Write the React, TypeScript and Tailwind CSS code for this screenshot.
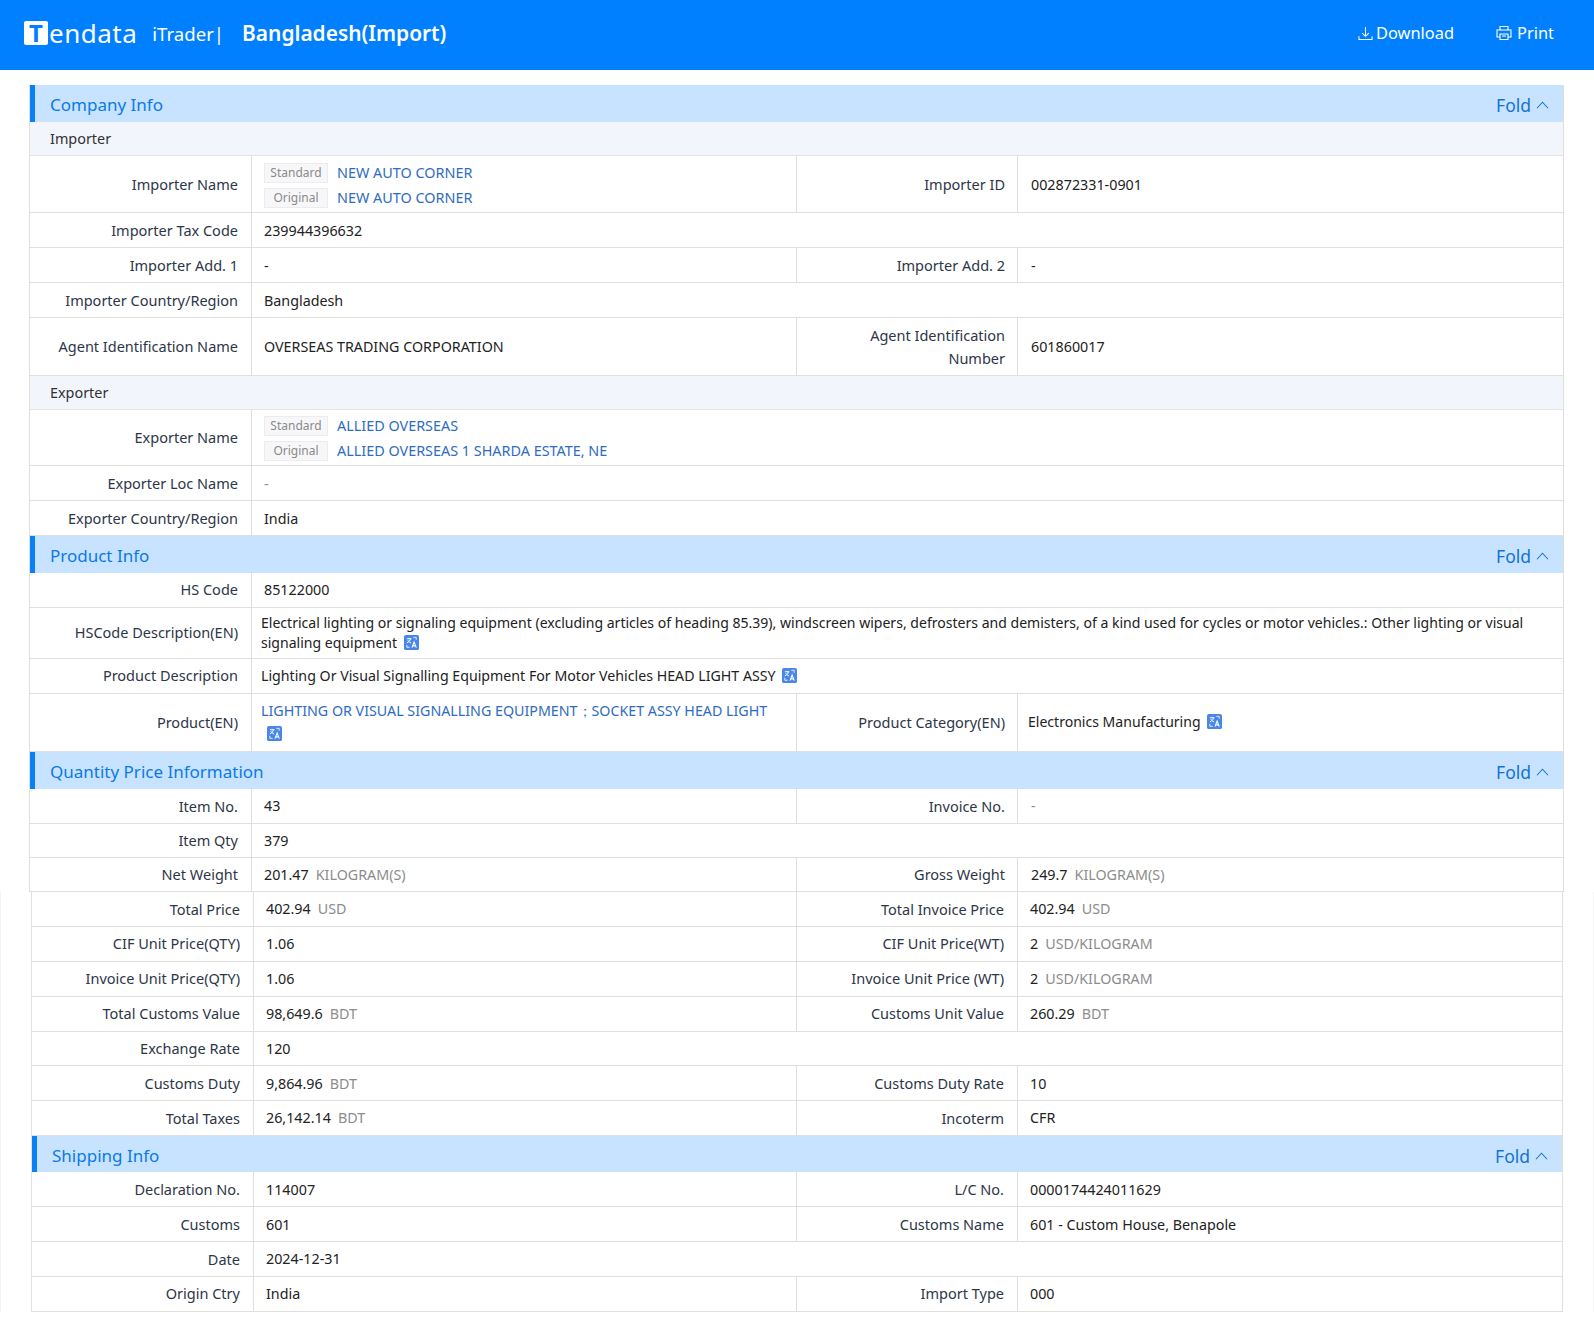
import React from "react";

const font = { fontFamily: '"Noto Sans", "Open Sans", sans-serif' };

function Translate({ far }: { far?: boolean }) {
  return (
    <svg viewBox="0 0 16 16" className={"inline-block w-[15px] h-[15px] align-[-2px] " + (far ? "ml-[6px]" : "ml-[3px]")}>
      <rect width="16" height="16" rx="2" fill="#4a86e8" />
      <path d="M3 4h5M5.5 3v1M7 4c-.4 2-2 3.5-4 4.4M4 5.5c.6 1.2 2 2.4 3.6 3" stroke="#fff" strokeWidth="1" fill="none" />
      <path d="M8.5 13.5l2.3-6 2.3 6M9.4 11.6h2.9" stroke="#fff" strokeWidth="1.1" fill="none" />
      <path d="M3 10.5v2.6h3M10 2.5h3v2.6" stroke="#fff" strokeWidth=".9" fill="none" />
    </svg>
  );
}

function Bar({ title, tall }: { title: string; tall?: boolean }) {
  return (
    <div className={"bg-[#c8e3ff] border-l-[5px] border-[#0a80f5] flex items-center justify-between pl-[15px] pr-[14px] " + (tall ? "h-[37.4px]" : "h-[36.4px]")}>
      <span className="text-[17px] text-[#0a7ae8] pt-[2px]">{title}</span>
      <span className="flex items-center gap-[5px] text-[17.5px] text-[#1273d6] pt-[3px]">
        Fold
        <svg viewBox="0 0 14 8" className="w-[13px] h-[8px]" fill="none" stroke="#1273d6" strokeWidth="1.1">
          <path d="M1 7.5L7 1l6 6.5" />
        </svg>
      </span>
    </div>
  );
}

function Sub({ title }: { title: string }) {
  return (
    <div className="h-[34px] bg-[#f2f6fc] border-b border-[#e4e4e0] flex items-center pl-5 text-[14.4px] text-[#303133]">
      {title}
    </div>
  );
}

function Label({ children, narrow, right }: { children: React.ReactNode; narrow?: boolean; right?: boolean }) {
  return (
    <div className={"flex items-center justify-end text-right text-[14.5px] leading-[23px] text-[#2d3648] " + (right ? "pr-[12px]" : "pr-[13px]")}>
      <span className={narrow ? "max-w-[150px]" : ""}>{children}</span>
    </div>
  );
}

function Val({ children, className = "" }: { children?: React.ReactNode; className?: string }) {
  return (
    <div className={"flex items-center pr-3 text-[14.3px] text-[#222] border-l border-[#dfdfdb] " + className}>
      <div>{children}</div>
    </div>
  );
}

const Unit = ({ children }: { children: React.ReactNode }) => (
  <span className="text-[#8c8c8c] ml-[7px]">{children}</span>
);

function Row({ cells, h = 35, wide, narrow }: { cells: React.ReactNode[]; h?: number; wide: boolean; narrow?: boolean }) {
  const cols = wide ? "grid-cols-[221px_545px_221px_1fr]" : "grid-cols-[221px_543px_221px_1fr]";
  return (
    <div className={"grid border-b border-[#dfdfdb] " + cols} style={{ height: h }}>
      <Label>{cells[0]}</Label>
      {cells.length === 2 ? (
        <Val className="col-span-3 pl-[12px]">{cells[1]}</Val>
      ) : (
        <>
          <Val className="pl-[12px]">{cells[1]}</Val>
          <div className="border-l border-[#dfdfdb] flex items-center justify-end">
            <Label narrow={narrow} right={wide}>{cells[2]}</Label>
          </div>
          <Val className={wide ? "pl-[13px]" : "pl-[12px]"}>{cells[3]}</Val>
        </>
      )}
    </div>
  );
}

function Row2(p: { cells: React.ReactNode[] }) {
  return <Row wide={false} h={34.85} cells={p.cells} />;
}

function NameVal({ a, b }: { a: string; b: string }) {
  const Tag = ({ t }: { t: string }) => (
    <span className="inline-flex w-[64px] h-[20px] items-center justify-center bg-[#f7f7f9] border border-[#ececee] text-[12px] text-[#8a8a8a] mr-[9px]">
      {t}
    </span>
  );
  return (
    <div className="flex flex-col gap-[5px] leading-[20px] text-[14.4px] mt-[2px]">
      <div className="flex items-center text-[#2f6cc0]"><Tag t="Standard" />{a}</div>
      <div className="flex items-center text-[#2f6cc0]"><Tag t="Original" />{b}</div>
    </div>
  );
}

function Long({ children, big }: { children: React.ReactNode; big?: boolean }) {
  return <div className={"-ml-[3px] leading-[20px] " + (big ? "text-[14.2px]" : "text-[14.05px]")}>{children}</div>;
}

export default function App() {
  return (
    <div className="bg-white w-[1594px] h-[1324px] overflow-hidden" style={font}>
      <header className="h-[70px] bg-[#0080ff] flex items-center justify-between text-white pl-6 pr-[40px] pb-[3px]">
        <div className="flex items-center">
          <div className="flex items-center">
            <span className="w-[24px] h-[24px] bg-white rounded-[2px] flex items-center justify-center text-[#0080ff] text-[24px] font-bold leading-none">T</span>
            <span className="text-[26px] leading-none ml-[1px] tracking-[0.5px]">endata</span>
          </div>
          <span className="text-[18.6px] ml-[15px]">iTrader|</span>
          <span className="text-[20.9px] font-semibold ml-[18px]">Bangladesh(Import)</span>
        </div>
        <div className="flex items-center text-[16.4px]">
          <span className="flex items-center gap-[3px]">
            <svg viewBox="0 0 16 16" className="w-[15px] h-[15px]" fill="none" stroke="#fff" strokeWidth="1.1">
              <path d="M8 1v10M4.5 7.5L8 11l3.5-3.5M1 11v3.5h14V11" />
            </svg>
            Download
          </span>
          <span className="flex items-center gap-[5px] ml-[42px]">
            <svg viewBox="0 0 16 16" className="w-[16px] h-[16px]" fill="none" stroke="#fff" strokeWidth="1.1">
              <path d="M4 5V1.5h8V5M4 12H1V5h14v7h-3M4 9h8v5.5H4zM6 11h4" />
            </svg>
            Print
          </span>
        </div>
      </header>

      <main className="pt-[15px]">
        <div className="ml-[29px] w-[1535px] border-x border-[#dfdfdb]">
          <Bar tall title="Company Info" />
          <Sub title="Importer" />
          <Row wide h={57} cells={["Importer Name", <NameVal a="NEW AUTO CORNER" b="NEW AUTO CORNER" />, "Importer ID", "002872331-0901"]} />
          <Row wide cells={["Importer Tax Code", "239944396632"]} />
          <Row wide cells={["Importer Add. 1", "-", "Importer Add. 2", "-"]} />
          <Row wide cells={["Importer Country/Region", "Bangladesh"]} />
          <Row wide narrow h={58} cells={["Agent Identification Name", "OVERSEAS TRADING CORPORATION", "Agent Identification Number", "601860017"]} />
          <Sub title="Exporter" />
          <Row wide h={56} cells={["Exporter Name", <NameVal a="ALLIED OVERSEAS" b="ALLIED OVERSEAS 1 SHARDA ESTATE, NE" />]} />
          <Row wide cells={["Exporter Loc Name", <span className="text-[#8c8c8c]">-</span>]} />
          <Row wide cells={["Exporter Country/Region", "India"]} />
          <Bar title="Product Info" />
          <Row wide cells={["HS Code", "85122000"]} />
          <Row wide h={51} cells={["HSCode Description(EN)", <Long>Electrical lighting or signaling equipment (excluding articles of heading 85.39), windscreen wipers, defrosters and demisters, of a kind used for cycles or motor vehicles.: Other lighting or visual signaling equipment <Translate /></Long>]} />
          <Row wide cells={["Product Description", <Long big>Lighting Or Visual Signalling Equipment For Motor Vehicles HEAD LIGHT ASSY <Translate /></Long>]} />
          <Row wide h={58} cells={["Product(EN)", <div className="-ml-[3px] leading-[23px] text-[14.25px] text-[#2f6cc0]">LIGHTING OR VISUAL SIGNALLING EQUIPMENT；SOCKET ASSY HEAD LIGHT <Translate far /></div>, "Product Category(EN)", <Long>Electronics Manufacturing <Translate /></Long>]} />
          <Bar tall title="Quantity Price Information" />
          <Row wide cells={["Item No.", "43", "Invoice No.", <span className="text-[#8c8c8c]">-</span>]} />
          <Row wide h={34} cells={["Item Qty", "379"]} />
          <Row wide h={34} cells={["Net Weight", <>201.47<Unit>KILOGRAM(S)</Unit></>, "Gross Weight", <>249.7<Unit>KILOGRAM(S)</Unit></>]} />
        </div>
        <div className="w-[1594px] pl-[30px] border-x border-[#f4f4f4]">
          <div className="w-[1532px] border-x border-[#dfdfdb]">
            <Row2 cells={["Total Price", <>402.94<Unit>USD</Unit></>, "Total Invoice Price", <>402.94<Unit>USD</Unit></>]} />
            <Row2 cells={["CIF Unit Price(QTY)", "1.06", "CIF Unit Price(WT)", <>2<Unit>USD/KILOGRAM</Unit></>]} />
            <Row2 cells={["Invoice Unit Price(QTY)", "1.06", "Invoice Unit Price (WT)", <>2<Unit>USD/KILOGRAM</Unit></>]} />
            <Row2 cells={["Total Customs Value", <>98,649.6<Unit>BDT</Unit></>, "Customs Unit Value", <>260.29<Unit>BDT</Unit></>]} />
            <Row2 cells={["Exchange Rate", "120"]} />
            <Row2 cells={["Customs Duty", <>9,864.96<Unit>BDT</Unit></>, "Customs Duty Rate", "10"]} />
            <Row2 cells={["Total Taxes", <>26,142.14<Unit>BDT</Unit></>, "Incoterm", "CFR"]} />
            <Bar title="Shipping Info" />
            <Row2 cells={["Declaration No.", "114007", "L/C No.", "0000174424011629"]} />
            <Row2 cells={["Customs", "601", "Customs Name", "601 - Custom House, Benapole"]} />
            <Row2 cells={["Date", "2024-12-31"]} />
            <Row2 cells={["Origin Ctry", "India", "Import Type", "000"]} />
          </div>
        </div>
      </main>
    </div>
  );
}
